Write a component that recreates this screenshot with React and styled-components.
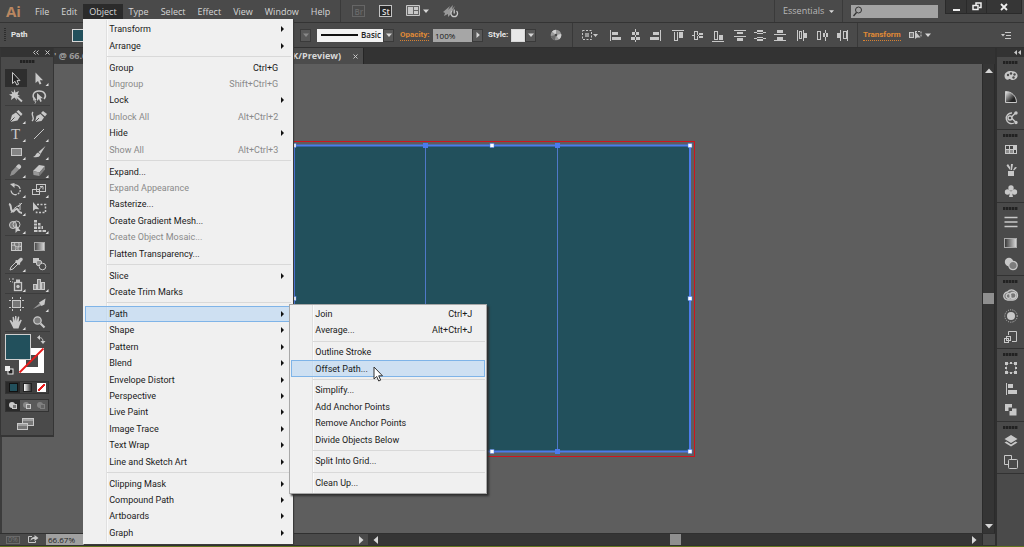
import styled, { createGlobalStyle, css } from 'styled-components';

const GlobalStyle = createGlobalStyle`
  * {
    box-sizing: border-box;
  }

  body {
    margin: 0;
    background: #5e5e5e;
    font-family: 'Open Sans', 'Noto Sans', sans-serif;
    font-size: 9px;
    line-height: 12px;
    color: #d6d6d6;
    overflow: hidden;
  }

  button, input, select {
    margin: 0;
    padding: 0;
    border: 0;
    border-radius: 0;
    outline: 0;
    background: none;
    color: inherit;
    font: inherit;
  }
`;

const Page = styled.div`
  height: 100vh;
  display: flex;
  flex-direction: column;
  border-bottom: 1px solid #64761f;
`;

/* top bar */

const MenuBar = styled.header`
  flex: none;
  height: 22px;
  display: flex;
  align-items: center;
  background: #4a4a4a;
`;

const Logo = styled.span`
  width: 29px;
  padding-left: 6px;
  color: #b98761;
  font-size: 15px;
  font-weight: 700;
`;

const MenuNav = styled.nav`
  display: flex;
  padding-top: 1px;
`;

const MenuEntry = styled.div`
  position: relative;
`;

const MenuButton = styled.button`
  display: block;
  height: 15px;
  padding: 0 6px;
  background: ${props => props.$open ? '#2b2b2b' : 'transparent'};
  font-size: 9px;
`;

const BarIcons = styled.div`
  display: flex;
  align-items: center;
  gap: 14px;
  height: 22px;
  margin-left: 4px;
  padding-left: 11px;
  border-left: 1px solid #3a3a3a;
`;

const AppTile = styled.button`
  width: 13px;
  height: 12px;
  border: 1px solid ${props => props.$dim ? '#666' : '#c4c4c4'};
  background: ${props => props.$dim ? 'transparent' : '#2a2a2a'};
  color: ${props => props.$dim ? '#686868' : '#e2e2e2'};
  font-size: 8px;
  font-weight: 600;
  line-height: 9px;
`;

const IconButton = styled.button`
  display: flex;
  align-items: center;
  justify-content: center;
  gap: 3px;
`;

const Workspace = styled.label`
  display: flex;
  align-items: center;
  height: 22px;
  margin-left: auto;
  padding: 0 8px;
  border: solid #3a3a3a;
  border-width: 0 1px;
`;

const WorkspaceSelect = styled.select`
  appearance: none;
  width: 46px;
  color: #b8b8b8;
`;

const Search = styled.label`
  display: flex;
  align-items: center;
  width: 87px;
  height: 13px;
  margin: 0 7px 0 8px;
  padding-left: 1px;
  background: #a3a3a3;
`;

const SearchInput = styled.input`
  flex: 1;
  min-width: 0;
  color: #222;
`;

const WindowButtons = styled.div`
  align-self: flex-start;
  display: flex;
  margin-right: 2px;
  border: 1px solid #2a2a2a;
  border-top: 0;
  background: #363636;
`;

const WindowButton = styled.button`
  display: flex;
  align-items: center;
  justify-content: center;
  width: ${props => props.$wide ? 35 : 20}px;
  height: 13px;

  & + & {
    border-left: 1px solid #2a2a2a;
  }
`;

/* control bar */

const ControlBar = styled.div`
  flex: none;
  height: 26px;
  display: flex;
  align-items: center;
  border-top: 1px solid #343434;
  border-bottom: 1px solid #303030;
  background: #4a4a4a;
  white-space: nowrap;
`;

const SideGrip = styled.span`
  width: 2px;
  height: 14px;
  margin: 0 5px 0 4px;
  background: repeating-linear-gradient(#2d2d2d 0 1px, #4a4a4a 1px 2px);
`;

const Strong = styled.span`
  color: #e6e6e6;
  font-family: Roboto, 'Open Sans', sans-serif;
  font-size: 8px;
  font-weight: 700;
`;

const Appearance = styled.div`
  display: flex;
  align-items: center;
  justify-content: space-between;
  width: 300px;
`;

const Swatch = styled.button`
  width: 14px;
  height: 13px;
  border: 1px solid #d8d8d8;
  background: ${props => props.$color};
`;

const FillSwatch = styled(Swatch)`
  margin: 0 auto 0 44px;
`;

const Stepper = styled.button`
  display: flex;
  align-items: center;
  justify-content: center;
  width: 11px;
  height: 13px;
  border: 1px solid #3a3a3a;
  background: #585858;
`;

const Profile = styled.label`
  display: flex;
  align-items: center;
  width: 66px;
  height: 13px;
  margin-left: 6px;
  padding-left: 4px;
  background: #f2f2f2;
`;

const StrokeLine = styled.span`
  width: 37px;
  height: 2px;
  margin-right: 3px;
  background: #111;
`;

const ProfileSelect = styled.select`
  appearance: none;
  width: 22px;
  color: #222;
  font-size: 8px;
  font-weight: 600;
`;

const OrangeLink = styled.a`
  border-bottom: 1px dotted #d98232;
  color: #e08a36;
  font-family: Roboto, 'Open Sans', sans-serif;
  font-size: 8px;
  font-weight: 700;
  line-height: 10px;
  text-decoration: none;
`;

const OpacityLink = styled(OrangeLink)`
  width: 29px;
  margin: 0 4px 0 6px;
`;

const OpacityInput = styled.input`
  width: 39px;
  height: 13px;
  padding-left: 2px;
  background: #a6a6a6;
  color: #161616;
  font-size: 8px;
`;

const StyleLabel = styled(Strong)`
  width: 23px;
  margin-left: 5px;
`;

const Recolor = styled(IconButton)`
  width: 37px;
  height: 24px;
  padding-left: 4px;
  border-right: 1px solid #393939;
`;

const AlignSet = styled.div`
  display: flex;
  align-items: center;
  gap: 6px;
  padding: 0 7px 0 5px;
`;

const AlignTo = styled(IconButton)`
  margin-right: 4px;
`;

const AlignGroup = styled.div`
  display: flex;
  gap: 4px;
`;

const TransformSet = styled.div`
  display: flex;
  align-items: center;
  gap: 8px;
  height: 24px;
  padding-left: 5px;
  border-left: 1px solid #393939;
`;

const PanelMenu = styled(IconButton)`
  margin: 0 12px 0 auto;
`;

/* drop-down menus */

const menuBox = css`
  position: absolute;
  display: flex;
  flex-direction: column;
  margin: 0;
  padding: 1px;
  list-style: none;
  background: linear-gradient(to right, #f0f0f0 22px, #e0e0e0 22px 23px, #fafafa 23px 24px, #f0f0f0 24px);
  border: 1px solid #f0f0f0;
  color: #1a1a1a;
`;

const Menu = styled.ul`
  ${menuBox}
  z-index: 10;
  top: 15px;
  left: 0;
  width: 210px;
  height: 525px;
  border-bottom-width: 2px;
  box-shadow: 1px 1px 1px #3a3a3a;
`;

const SubMenu = styled.ul`
  ${menuBox}
  top: -2px;
  left: calc(100% - 2px);
  width: 198px;
  height: 190px;
  border-color: #a8a8a8;
  box-shadow: 2px 2px 2px #2f2f2f;
`;

const MenuRow = styled.li`
  position: relative;
  flex: 3 1 0;
  min-height: 0;
`;

const MenuItem = styled.button`
  display: flex;
  align-items: center;
  justify-content: space-between;
  width: 100%;
  height: 100%;
  padding: 0 ${props => props.$parent ? 6 : 12}px 0 23px;
  border: 1px solid ${props => props.$active ? '#7fb4e8' : 'transparent'};
  background: ${props => props.$active ? 'rgba(183, 214, 243, 0.6)' : 'transparent'};
  color: ${props => props.disabled ? '#8a8a8a' : '#1a1a1a'};
  font-family: Roboto, 'Open Sans', sans-serif;
  white-space: nowrap;
`;

const Separator = styled.li`
  flex: 1 1 0;
  display: flex;
  align-items: center;
  padding-left: 22px;

  &::before {
    content: '';
    flex: 1;
    height: 1px;
    background: #d9d9d9;
  }
`;

const Cursor = styled.svg`
  position: absolute;
  top: 6px;
  left: 82px;
  pointer-events: none;
`;

/* work area */

const Body = styled.main`
  position: relative;
  flex: 1;
  min-height: 0;
  display: flex;
`;

const DocumentArea = styled.section`
  flex: 1;
  min-width: 0;
  display: flex;
  flex-direction: column;
`;

const Tabs = styled.div`
  flex: none;
  display: flex;
  height: 16px;
  padding-left: 53px;
  background: #333;
`;

const Tab = styled.button`
  display: flex;
  align-items: center;
  justify-content: space-between;
  width: ${props => props.$width}px;
  padding: 0 5px 0 1px;
  border-right: 1px solid #262626;
  background: ${props => props.$active ? '#4c4c4c' : '#3a3a3a'};
  color: ${props => props.$active ? '#d8d8d8' : '#9c9c9c'};
  font-weight: 700;
  text-align: left;
`;

const TabTitle = styled.span`
  flex: 1;
  padding-right: 12px;
  text-align: ${props => props.$end ? 'right' : 'left'};
`;

const CanvasRow = styled.div`
  flex: 1;
  min-height: 0;
  display: flex;
`;

const Canvas = styled.div`
  flex: 1;
  display: flex;
  align-items: center;
  justify-content: center;
  border-left: 2px solid #3c3c3c;
  background: #5e5e5e;
`;

const VerticalScroll = styled.div`
  display: flex;
  flex-direction: column;
  align-items: center;
  justify-content: space-between;
  width: 13px;
  padding: 3px 0;
  border: solid #2b2b2b;
  border-width: 0 1px;
  background: #353535;
`;

const Thumb = styled.span`
  width: 11px;
  height: 11px;
  background: #8f8f8f;
`;

const StatusBar = styled.footer`
  flex: none;
  display: flex;
  height: 13px;
  border-top: 1px solid #303030;
  border-bottom: 1px solid #303030;
  background: #4a4a4a;
`;

const StatusInfo = styled.div`
  display: flex;
  align-items: center;
  width: 368px;
  padding: 0 3px 0 6px;
`;

const GpuBadge = styled.span`
  width: 14px;
  height: 8px;
  margin-right: 7px;
  border: 1px solid #6a6a6a;
  color: #777;
  font-size: 7px;
  line-height: 6px;
  text-align: center;
`;

const ZoomInput = styled.input`
  width: 60px;
  height: 11px;
  margin: 0 auto 0 7px;
  padding-left: 2px;
  background: #a0a0a0;
  color: #222;
  font-size: 8px;
`;

const HorizontalScroll = styled.div`
  flex: 1;
  display: flex;
  align-items: center;
  justify-content: space-between;
  padding: 0 4px;
  background: #353535;
`;

const Corner = styled.span`
  width: 13px;
  border-left: 1px solid #2b2b2b;
`;

/* tools */

const ToolPanel = styled.aside`
  position: absolute;
  top: 0;
  left: 0;
  width: 54px;
  padding-bottom: 3px;
  border: solid #353535;
  border-width: 0 1px 2px;
  background: #4a4a4a;
`;

const PanelHead = styled.div`
  display: flex;
  align-items: center;
  justify-content: flex-end;
  gap: 6px;
  height: 9px;
  padding-right: 3px;
  background: #333;
`;

const Grip = styled.div`
  width: 15px;
  height: 3px;
  margin: 3px auto ${props => props.$gap}px;
  background: repeating-linear-gradient(to right, #222 0 2px, #383838 2px 3px);
`;

const ToolGroup = styled.div`
  display: grid;
  grid-template-columns: 23px 23px;
  margin: 0 3px 1px 4px;
  border-bottom: 1px solid #3c3c3c;
`;

const ToolButton = styled.button`
  display: block;
  width: 22px;
  height: 18px;
  background: ${props => props.$active ? '#2e2e2e' : 'transparent'};
`;

const ColorWell = styled.div`
  margin: 2px 0 2px 4px;
`;

const ModeRow = styled.div`
  display: flex;
  width: 44px;
  margin: 0 0 5px 4px;
  border: 1px solid #333;
  background: ${props => props.$raised ? '#5a5a5a' : '#3f3f3f'};
`;

const ModeButton = styled.button`
  display: flex;
  align-items: center;
  justify-content: center;
  flex: 1;
  height: 11px;
  background: ${props => props.$active ? '#2a2a2a' : 'transparent'};
`;

const ModeColor = styled.span`
  width: 9px;
  height: 9px;
  border: 1px solid ${props => props.$edge};
  background: ${props => props.$paint};
`;

const ScreenMode = styled(IconButton)`
  width: 42px;
  height: 15px;
  margin-left: 4px;
`;

/* right dock */

const Dock = styled.aside`
  width: 29px;
  border-left: 2px solid #2f2f2f;
  background: #4a4a4a;
`;

const DockGroup = styled.div`
  padding: 1px 0;
  border-bottom: 1px solid #323232;
`;

const DockButton = styled(IconButton)`
  width: 27px;
  height: 21px;
`;

const menus = ['File', 'Edit', 'Object', 'Type', 'Select', 'Effect', 'View', 'Window', 'Help'];

const pathMenu = [
  { label: 'Join', keys: 'Ctrl+J' },
  { label: 'Average...', keys: 'Alt+Ctrl+J' },
  null,
  { label: 'Outline Stroke' },
  { label: 'Offset Path...', active: true, cursor: true },
  null,
  { label: 'Simplify...' },
  { label: 'Add Anchor Points' },
  { label: 'Remove Anchor Points' },
  { label: 'Divide Objects Below' },
  null,
  { label: 'Split Into Grid...' },
  null,
  { label: 'Clean Up...' },
];

const objectMenu = [
  { label: 'Transform', parent: true },
  { label: 'Arrange', parent: true },
  null,
  { label: 'Group', keys: 'Ctrl+G' },
  { label: 'Ungroup', keys: 'Shift+Ctrl+G', disabled: true },
  { label: 'Lock', parent: true },
  { label: 'Unlock All', keys: 'Alt+Ctrl+2', disabled: true },
  { label: 'Hide', parent: true },
  { label: 'Show All', keys: 'Alt+Ctrl+3', disabled: true },
  null,
  { label: 'Expand...' },
  { label: 'Expand Appearance', disabled: true },
  { label: 'Rasterize...' },
  { label: 'Create Gradient Mesh...' },
  { label: 'Create Object Mosaic...', disabled: true },
  { label: 'Flatten Transparency...' },
  null,
  { label: 'Slice', parent: true },
  { label: 'Create Trim Marks' },
  null,
  { label: 'Path', parent: true, active: true, items: pathMenu },
  { label: 'Shape', parent: true },
  { label: 'Pattern', parent: true },
  { label: 'Blend', parent: true },
  { label: 'Envelope Distort', parent: true },
  { label: 'Perspective', parent: true },
  { label: 'Live Paint', parent: true },
  { label: 'Image Trace', parent: true },
  { label: 'Text Wrap', parent: true },
  { label: 'Line and Sketch Art', parent: true },
  null,
  { label: 'Clipping Mask', parent: true },
  { label: 'Compound Path', parent: true },
  { label: 'Artboards', parent: true },
  { label: 'Graph', parent: true },
];

const ink = '#c8c8c8';

// every tool is drawn in a 22 x 18 box
const tools = [
  [
    { name: 'Selection', active: true, art: <path d="M7.5 3.5V14.5L10 12.3 11.8 16 13.6 15.2 12 11.6H15z" fill="#222" stroke={ink} /> },
    { name: 'Direct Selection', more: true, art: <path d="M7.5 3.5V14L10 11.9 11.6 15.6 13.4 14.8 11.8 11.2H15z" fill={ink} /> },
    { name: 'Magic Wand', art: <g><path d="M11 9l6 5.500" stroke={ink} strokeWidth="1.8" /><path d="M9.500 2l1 3.500L14 4l-1.500 3.500L15 9l-3.500.5.5 4-2.500-3L6 13l.7-3.700L4 7.500l3.300-.7L6 4l2.700 1.500z" fill={ink} /></g> },
    { name: 'Lasso', art: <g><path d="M8 13c-5-3-3-9 3-9s8 5 5 8" fill="none" stroke={ink} strokeWidth="1.5" /><path d="M9 6v8l2-2 1.300 3 1.500-.7-1.200-3h2.400z" fill={ink} /><path d="M7 11c-2 0-2 3 0 3 1 0 1 1 0 2.500" fill="none" stroke={ink} /></g> },
  ],
  [
    { name: 'Pen', more: true, art: <g><path d="M5 15l2-7 4-2.500 4 4-2.500 4z" fill={ink} /><path d="M11.500 4.500l2-1.500 4 4-1.500 2z" fill={ink} /><path d="M5 15l4.500-4.500" stroke="#4a4a4a" /></g> },
    { name: 'Curvature', art: <g><path d="M7 15l1.500-6 4-2 3.500 3.500-2.500 3.500z" fill={ink} /><path d="M13 6l2-2 4 3-2 2.500z" fill={ink} /><path d="M4 14c4-3-2-6 1-9" fill="none" stroke={ink} strokeWidth="1.300" /><path d="M7 15l4-4" stroke="#4a4a4a" /></g> },
    { name: 'Type', more: true, art: <text x="6" y="14" fontFamily="Liberation Serif, serif" fontSize="15" fill={ink}>T</text> },
    { name: 'Line', more: true, art: <path d="M6 14L16 4" stroke={ink} /> },
    { name: 'Rectangle', more: true, art: <rect x="6.500" y="5.500" width="10" height="7" fill="#858585" stroke={ink} /> },
    { name: 'Paintbrush', more: true, art: <g><path d="M17.500 3l-7 6 2 2z" fill={ink} /><path d="M10 9.500l2.500 2c-1 3-4 3-7.500 2.500 3-1 2.500-3.500 5-4.500z" fill={ink} /></g> },
    { name: 'Pencil', more: true, art: <g><path d="M5 15l1.500-4.500 6.500-7c1.500-1 4 1.500 3 3l-7 7z" fill="#909090" /><path d="M12.500 4c1.500-1.500 4.500 1 3.300 2.700l-1.500 1.500-3.300-2.700z" fill={ink} /></g> },
    { name: 'Eraser', more: true, art: <g><path d="M5 10l6-6 6 1-5.500 6.500z" fill={ink} /><path d="M5 10l6.500 1.500V15L5.500 14z" fill="#999" /><path d="M11.500 11.500L17 5v3.500L11.500 15z" fill="#7c7c7c" /></g> },
  ],
  [
    { name: 'Rotate', more: true, art: <g><path d="M8 4.500c5-2.500 10 4 5.500 8-3 2.500-7 1-7.500-3" fill="none" stroke={ink} strokeWidth="1.300" strokeDasharray="9 1 2 1 2 1" /><path d="M5 3l4.500-1v5z" fill={ink} /></g> },
    { name: 'Scale', more: true, art: <g fill="none" stroke={ink}><rect x="8.500" y="3.500" width="9" height="7" /><rect x="4.500" y="8.500" width="7" height="5" /><path d="M10 9l5-4M12 5.500h3v3" /></g> },
    { name: 'Width', more: true, art: <g fill="none" stroke={ink}><path d="M4 5c3 1 1 5 3 7s3-3 5-2 1 4 5 4" strokeWidth="2" /><path d="M6 14c2-5 6-6 8-8M15 4v7M13 8l4-4" /></g> },
    { name: 'Free Transform', art: <g><path d="M5 3v9l2.300-2 4 .2z" fill={ink} /><path d="M9 5.500h8.500v8H8.500V11" fill="none" stroke={ink} strokeDasharray="2 1.500" strokeWidth="1.500" /></g> },
    { name: 'Shape Builder', more: true, art: <g><circle cx="8" cy="8" r="3.500" fill="#777" stroke={ink} /><circle cx="11.500" cy="7.500" r="3.500" fill="none" stroke={ink} /><path d="M10.500 7v9l2-2 3 0z" fill={ink} /></g> },
    { name: 'Perspective Grid', more: true, art: <g><path d="M6 3h3v9H6zM10 6h2.500v6H10zM13.500 9H15v3h-1.500zM6 13h12v2H6z" fill={ink} /><path d="M6 6h3M6 9h6.500M10 13v2M14 13v2" stroke="#4a4a4a" /></g> },
  ],
  [
    { name: 'Mesh', art: <g stroke={ink} fill="none"><rect x="6.500" y="5.500" width="10" height="8" fill="#777" /><path d="M6.500 9c3-3 4 3 10 0M10 5.500c-2 4 3 4 0 8M13.500 5.500c2 4-2 4 0 8" /></g> },
    { name: 'Gradient', art: <g><defs><linearGradient id="tool-gradient"><stop stopColor="#444" /><stop offset="1" stopColor="#ddd" /></linearGradient></defs><rect x="6.500" y="5.500" width="10" height="8" fill="url(#tool-gradient)" stroke="#a8a8a8" /></g> },
    { name: 'Eyedropper', more: true, art: <g><path d="M5 15l1-3 5-5 2 2-5 5z" fill="none" stroke={ink} /><path d="M10 6l1.500-1 1 .3L15 3c2-1 3.500.7 2.500 2.200L15 8l.2 1.200-1.200 1z" fill={ink} /></g> },
    { name: 'Blend', art: <g stroke={ink}><rect x="5" y="3" width="6" height="5" fill={ink} stroke="none" /><rect x="8.500" y="5.500" width="5" height="5" rx="1.500" fill="#888" /><circle cx="14.500" cy="11.500" r="3.300" fill="#4a4a4a" /></g> },
  ],
  [
    { name: 'Symbol Sprayer', more: true, art: <g><rect x="9.500" y="7.500" width="7" height="8" fill="#555" stroke={ink} strokeWidth="1.300" /><path d="M11 7V4.500h4V7" fill={ink} /><circle cx="13" cy="11.500" r="1.700" fill={ink} /><path d="M4 4h1M7 4h2M5 6.500h1M7 7h1" stroke={ink} /></g> },
    { name: 'Column Graph', more: true, art: <g fill="#8e8e8e" stroke={ink}><rect x="5.500" y="9.500" width="3" height="5" /><rect x="9.500" y="4.500" width="3" height="10" /><rect x="13.500" y="7.500" width="3" height="7" /></g> },
  ],
  [
    { name: 'Artboard', art: <g stroke={ink} fill="none"><rect x="7.500" y="5.500" width="8" height="7" fill="#777" /><path d="M7.500 2v2M15.500 2v2M7.500 14v2M15.500 14v2M4 5.500h2M17 5.500h2M4 12.500h2M17 12.500h2" /></g> },
    { name: 'Slice', more: true, art: <g><path d="M5 14l7-6 2 2z" fill="#999" /><path d="M11 7.500l6.500-4-1 6-3 1.500z" fill={ink} /></g> },
    { name: 'Hand', more: true, art: <path d="M6 10.500l-1.500-3 1.300-.6L8 9.500 7.500 4l1.300-.2L10 8V3h1.400l.3 5 1.300-4.500 1.300.3L13.700 9l2-2.500 1.100.7-2.300 5.300-1 3H8.500z" fill={ink} /> },
    { name: 'Zoom', art: <g><circle cx="9.500" cy="7.500" r="3.700" fill="#7d7d7d" stroke={ink} strokeWidth="1.300" /><path d="M12.500 10.500l4 4" stroke={ink} strokeWidth="2.200" /></g> },
  ],
];

// dock icons use a 16 x 16 box
const dock = [
  [
    { name: 'Color', art: <g><path d="M8 3c5 0 7 3 6.500 5.500S11 12.500 9 12 7 10.500 5.500 11.500 1.500 11 1.500 8 4 3 8 3z" fill={ink} /><g fill="#4a4a4a"><circle cx="5" cy="7" r="1.200" /><circle cx="8" cy="5.500" r="1.200" /><circle cx="11.500" cy="6.500" r="1.200" /><circle cx="10.500" cy="9.500" r="1.200" /></g></g> },
    { name: 'Color Guide', art: <g><defs><linearGradient id="guide" x1="0" y1="0" x2="1" y2="1"><stop stopColor="#eee" /><stop offset=".7" stopColor="#222" /></linearGradient></defs><path d="M2.500 2.500c6 0 11 4.500 11 11h-11z" fill="url(#guide)" stroke={ink} /></g> },
    { name: 'Color Themes', art: <g fill="none" stroke={ink} strokeWidth="1.400"><path d="M11 13A5.300 5.300 0 1 1 9 3" /><circle cx="7" cy="8" r="2" /><path d="M8.500 7l4-4M9 8.500l4 4" /><circle cx="13" cy="3" r="1" fill={ink} /><circle cx="13" cy="12.500" r="1" fill={ink} /></g> },
  ],
  [
    { name: 'Swatches', art: <g><path d="M2 4h12v9H2z" fill={ink} /><path d="M3 5h3v3H3zM7 5h3v3H7zM11 9h2v3h-2z" fill="#444" /><path d="M3 9h3v3H3zM7 9h3v3H7z" fill="#8e8e8e" /></g> },
    { name: 'Brushes', art: <g fill={ink}><path d="M5 9h6v5H5z" /><path d="M7 8L3.500 3.500 5 2l2 3zM7.500 8L8 2h2L9 8zM10 8l2-3 2 .5L11 8.500z" /></g> },
    { name: 'Symbols', art: <g fill={ink}><circle cx="8" cy="5" r="2.700" /><circle cx="4.500" cy="9" r="2.700" /><circle cx="11.500" cy="9" r="2.700" /><path d="M7.300 8h1.400l1.300 6H6z" /></g> },
  ],
  [
    { name: 'Stroke', art: <path d="M1.500 3.500h13M1.500 8h13M1.500 12.500h13" stroke={ink} strokeWidth="1.600" /> },
    { name: 'Gradient', art: <g><defs><linearGradient id="dock-gradient"><stop stopColor="#333" /><stop offset="1" stopColor="#ddd" /></linearGradient></defs><rect x="1.500" y="3.500" width="12" height="9" fill="url(#dock-gradient)" stroke="#aaa" /></g> },
    { name: 'Transparency', art: <g><circle cx="6" cy="6" r="4.200" fill={ink} /><circle cx="10" cy="9.500" r="4.200" fill="#7d7d7d" stroke={ink} strokeWidth="1.200" /></g> },
  ],
  [
    { name: 'Libraries', art: <g fill="none" stroke={ink} strokeWidth="1.300"><path d="M5 13a4 4 0 0 1-.5-8C8 1 14 3.500 14.500 8c.2 3-2 5-4.500 5z" fill="#777" /><circle cx="5.500" cy="9" r="2.300" /><circle cx="10" cy="8.500" r="3" /></g> },
    { name: 'Appearance', art: <g><circle cx="8" cy="8" r="4" fill={ink} /><circle cx="8" cy="8" r="6.200" fill="none" stroke={ink} strokeDasharray="1 1.300" /></g> },
    { name: 'Graphic Styles', art: <g fill="none" stroke={ink}><path d="M5.500 6V2.500h8v10H9" /><rect x="1.500" y="9.500" width="4" height="4" /><rect x="3.500" y="7.500" width="4" height="4" /></g> },
  ],
  [
    { name: 'Transform', art: <g><rect x="3.500" y="3.500" width="9" height="9" fill="none" stroke="#999" strokeDasharray="1 1" /><g fill={ink}><path d="M2 2h3v3H2zM11 2h3v3h-3zM2 11h3v3H2zM11 11h3v3h-3zM7 2h2v2H7zM7 12h2v2H7zM2 7h2v2H2zM12 7h2v2h-2z" /></g></g> },
    { name: 'Align', art: <path d="M3 2h1v12H3zM5 3h5v4H5zM5 9h9v4H5z" fill={ink} /> },
    { name: 'Pathfinder', art: <g><path d="M2 2h7v7H2z" fill={ink} /><path d="M6.500 6.500h7v7h-7z" fill={ink} /><path d="M5.500 5.500H9V9H5.500z" fill="#4a4a4a" /></g> },
  ],
  [
    { name: 'Layers', art: <g fill={ink}><path d="M8 2l6.500 4L8 10 1.500 6z" /><path d="M1.500 9.500l2-1L8 11.500l4.500-3 2 1L8 13.500z" /></g> },
    { name: 'Artboards', art: <g fill="none" stroke={ink}><path d="M5 10.500H1.500v-9h7V5" /><rect x="5.500" y="5.500" width="9" height="9" rx="1" /></g> },
  ],
];

const alignIcons = [
  [
    ['Align left', 'M2 3h1v11H2zM4 5h6v3H4zM4 10h9v3H4z'],
    ['Align centre', 'M7 2h1v13H7zM4 5h7v3H4zM3 10h9v3H3z'],
    ['Align right', 'M12 3h1v11h-1zM5 5h6v3H5zM2 10h9v3H2z'],
  ],
  [
    ['Align top', 'M2 3h12v1H2zM4 5h1v8h2V5h1v9H4zM9 5h4v6H9z'],
    ['Align middle', 'M2 8h2v1H2zM7 8h6v1H7zM4 4h4v9H4zM5 5v7h2V5zM9 6h4v5H9z'],
    ['Align bottom', 'M2 14h12v1H2zM4 4h4v9H4zM5 5v7h2V5zM9 8h4v5H9z'],
  ],
  [
    ['Distribute top', 'M2 3h12v1H2zM5 5h6v2H5zM2 9h12v1H2zM5 11h6v3H5z'],
    ['Distribute middle', 'M2 5h12v1H2zM5 3h6v4H5zM2 11h12v1H2zM5 10h6v4H5z'],
    ['Distribute bottom', 'M2 7h12v1H2zM5 3h6v3H5zM2 13h12v1H2zM5 10h6v3H5z'],
  ],
  [
    ['Distribute left', 'M3 3h1v11H3zM5 4h3v8H5zM6 5v6h1V5zM9 3h1v11H9zM10 6h3v5h-3z'],
    ['Distribute centre', 'M3 4h4v9H3zM4 5v7h2V5zM11 3h1v11h-1zM9 6h5v4H9z'],
    ['Distribute right', 'M6 3h1v11H6zM3 6h3v5H3zM13 3h1v11h-1zM9 4h4v8H9zM10 5v6h2V5z'],
  ],
];

const Arrow = ({ dir, color = '#d6d6d6', size = 8 }) => {
  const turn = { right: 0, down: 90, left: 180, up: 270 }[dir];
  return (
    <svg width={size} height={size} viewBox="0 0 8 8">
      <path d="M2 0L6.500 4 2 8z" fill={color} transform={`rotate(${turn} 4 4)`} />
    </svg>
  );
};

const MenuList = ({ items }) => (
  items.map((item, index) => (
    item === null ? <Separator key={index} /> : (
      <MenuRow key={item.label}>
        <MenuItem $active={item.active} $parent={item.parent} disabled={item.disabled}>
          <span>{item.label}</span>
          {item.keys && <span>{item.keys}</span>}
          {item.parent && (
            <svg width="3" height="6" viewBox="0 0 3 6"><path d="M0 0l3 3-3 3z" fill="#111" /></svg>
          )}
        </MenuItem>
        {item.items && <SubMenu><MenuList items={item.items} /></SubMenu>}
        {item.cursor && (
          <Cursor width="11" height="17" viewBox="0 0 11 17">
            <path d="M1 1v12l2.700-2.500 2 4.500 2-.9-2-4.300H9.500z" fill="#fff" stroke="#333" />
          </Cursor>
        )}
      </MenuRow>
    )
  ))
);

const TopBar = () => (
  <MenuBar>
    <Logo>Ai</Logo>
    <MenuNav>
      {menus.map(name => (
        <MenuEntry key={name}>
          <MenuButton $open={name === 'Object'}>{name}</MenuButton>
          {name === 'Object' && <Menu><MenuList items={objectMenu} /></Menu>}
        </MenuEntry>
      ))}
    </MenuNav>
    <BarIcons>
      <AppTile $dim>Br</AppTile>
      <AppTile>St</AppTile>
      <IconButton aria-label="Arrange Documents">
        <svg width="14" height="12" viewBox="0 0 14 12">
          <path d="M.5.5h13v10H.5z" fill="#666" stroke={ink} />
          <path d="M2 2h5v7H2zM8 2h4v3H8zM8 6h4v3H8z" fill={ink} />
        </svg>
        <Arrow dir="down" size={6} />
      </IconButton>
      <IconButton aria-label="GPU Performance">
        <svg width="16" height="14" viewBox="0 0 16 14">
          <path d="M0 8l7-6-2 4 5-5-1 4 3-3-4 8-3 3 0-3-4 2 1-3z" fill="#999" />
          <path d="M9 7a3.300 3.300 0 1 0 4.500 0" fill="#4a4a4a" stroke={ink} strokeWidth="1.300" />
          <path d="M11.200 5.500v4" stroke={ink} strokeWidth="1.300" />
        </svg>
      </IconButton>
    </BarIcons>
    <Workspace>
      <WorkspaceSelect aria-label="Workspace"><option>Essentials</option></WorkspaceSelect>
      <Arrow dir="down" size={5} />
    </Workspace>
    <Search>
      <svg width="11" height="11" viewBox="0 0 11 11" fill="none" stroke="#333">
        <circle cx="6.500" cy="4" r="3" />
        <path d="M4.500 6.500L1.500 10" strokeWidth="1.300" />
      </svg>
      <SearchInput aria-label="Search" />
    </Search>
    <WindowButtons>
      <WindowButton aria-label="Minimize">
        <svg width="9" height="11" viewBox="0 0 9 11"><path d="M1 8h7v2H1z" fill="#eee" /></svg>
      </WindowButton>
      <WindowButton aria-label="Restore">
        <svg width="10" height="9" viewBox="0 0 10 9" fill="none" stroke="#eee" strokeWidth="1.500">
          <path d="M4 3V1h5v4.500H7" />
          <rect x="1" y="3.500" width="5" height="4" />
        </svg>
      </WindowButton>
      <WindowButton $wide aria-label="Close">
        <svg width="8" height="8" viewBox="0 0 8 8"><path d="M1 1l6 6M7 1L1 7" stroke="#eee" strokeWidth="1.800" /></svg>
      </WindowButton>
    </WindowButtons>
  </MenuBar>
);

const Controls = () => (
  <ControlBar>
    <SideGrip />
    <Appearance>
      <Strong>Path</Strong>
      <FillSwatch $color="#22505c" aria-label="Fill" />
      <Stepper aria-label="Brush"><Arrow dir="down" color="#888" size={6} /></Stepper>
    </Appearance>
    <Profile>
      <StrokeLine />
      <ProfileSelect aria-label="Stroke profile"><option>Basic</option></ProfileSelect>
    </Profile>
    <Stepper aria-label="Stroke profiles"><Arrow dir="down" size={6} /></Stepper>
    <OpacityLink href="#opacity">Opacity:</OpacityLink>
    <OpacityInput aria-label="Opacity" defaultValue="100%" />
    <Stepper aria-label="Opacity values"><Arrow dir="right" size={6} /></Stepper>
    <StyleLabel>Style:</StyleLabel>
    <Swatch $color="#e8e8e8" aria-label="Graphic style" />
    <Stepper aria-label="Graphic styles"><Arrow dir="down" size={6} /></Stepper>
    <Recolor aria-label="Recolor Artwork">
      <svg width="12" height="12" viewBox="0 0 12 12">
        <circle cx="6" cy="6" r="5.300" fill="#999" />
        <path d="M6 6L2 2.500A5.300 5.300 0 0 1 6 .7zM6 6l5.200-1A5.300 5.300 0 0 1 9 10.400z" fill="#d0d0d0" />
        <path d="M6 6L.8 7a5.300 5.300 0 0 0 4 4.200z" fill="#6a6a6a" />
        <circle cx="6" cy="6" r="1.300" fill="#4a4a4a" />
      </svg>
    </Recolor>
    <AlignSet>
      <AlignTo aria-label="Align To">
        <svg width="20" height="14" viewBox="0 0 20 14">
          <rect x="4.500" y="2.500" width="9" height="9" fill="none" stroke={ink} strokeDasharray="2 1.500" />
          <path d="M7 5h4v4H7z" fill="#999" />
          <path d="M15 6h5l-2.500 3z" fill={ink} />
        </svg>
      </AlignTo>
      {alignIcons.map(group => (
        <AlignGroup key={group[0][0]}>
          {group.map(([name, d]) => (
            <IconButton key={name} aria-label={name}>
              <svg width="16" height="16" viewBox="0 0 16 16"><path d={d} fill={ink} fillRule="evenodd" /></svg>
            </IconButton>
          ))}
        </AlignGroup>
      ))}
    </AlignSet>
    <TransformSet>
      <OrangeLink href="#transform">Transform</OrangeLink>
      <IconButton aria-label="Isolate">
        <svg width="13" height="10" viewBox="0 0 13 10">
          <rect x=".5" y="2.500" width="4" height="5" fill="#777" stroke={ink} />
          <path d="M6 1.500h6v5" fill="none" stroke={ink} strokeDasharray="2 1" />
          <path d="M6 1v8l2-1.500 3.500 0z" fill={ink} />
        </svg>
        <Arrow dir="down" size={6} />
      </IconButton>
    </TransformSet>
    <PanelMenu aria-label="Panel menu">
      <svg width="11" height="9" viewBox="0 0 11 9">
        <path d="M0 3h4L2 5.500zM4 1h6v1H4zM5 4h5v1H5zM4 7h6v1H4z" fill={ink} />
      </svg>
    </PanelMenu>
  </ControlBar>
);

const Artwork = () => (
  <svg width="406" height="317" viewBox="0 0 406 317">
    <rect x=".5" y="1.500" width="405" height="315" fill="none" stroke="#d0141e" />
    <rect x="5" y="5.500" width="396" height="306" fill="#22505c" stroke="#4b7bec" strokeWidth="2" />
    <path d="M136.500 6v305M268.500 6v305" stroke="#4f78c8" />
    <g fill="#4b7bec">
      <path d="M134 3h5v5h-5zM266 3h5v5h-5zM134 309h5v5h-5zM266 309h5v5h-5z" />
    </g>
    <g fill="#fff" stroke="#4b7bec" strokeWidth=".5">
      {[[5, 5.5], [203, 5.5], [401, 5.5], [5, 158.5], [401, 158.5], [5, 311.5], [203, 311.5], [401, 311.5]].map(([x, y]) => (
        <rect key={`${x}-${y}`} x={x - 2} y={y - 2} width="4" height="4" />
      ))}
    </g>
  </svg>
);

const Tools = () => (
  <ToolPanel>
    <PanelHead>
      <svg width="6" height="5" viewBox="0 0 6 5" fill="none" stroke={ink}><path d="M2.500.5l-2 2 2 2M5.500.5l-2 2 2 2" /></svg>
      <svg width="5" height="5" viewBox="0 0 5 5"><path d="M.5.5l4 4M4.500.5l-4 4" stroke={ink} /></svg>
    </PanelHead>
    <Grip $gap={6} />
    {tools.map(group => (
      <ToolGroup key={group[0].name}>
        {group.map(tool => (
          <ToolButton key={tool.name} $active={tool.active} aria-label={tool.name}>
            <svg width="22" height="18" viewBox="0 0 22 18">
              {tool.art}
              {tool.more && <path d="M20.500 14v3h-3z" fill="#ddd" />}
            </svg>
          </ToolButton>
        ))}
      </ToolGroup>
    ))}
    <ColorWell>
      <svg width="44" height="42" viewBox="0 0 44 42">
        <path d="M14 14h25v25H14zM21 21v12h12V21z" fill="#fff" fillRule="evenodd" />
        <path d="M14.500 38.500l24-24" stroke="#e81c1c" strokeWidth="1.800" />
        <rect x=".5" y=".5" width="25" height="25" fill="#22505c" stroke="#d0d0d0" />
        <path d="M33 3.500c4 0 5 1 5 5" fill="none" stroke={ink} />
        <path d="M32 3.500l3-2.500v5zM38 10l-2.500-3h5z" fill={ink} />
        <rect x="3" y="35" width="5" height="5" fill="#222" stroke="#eee" />
        <path d="M0 32h5v5H0z" fill="#eee" />
      </svg>
    </ColorWell>
    <ModeRow>
      <ModeButton $active aria-label="Color"><ModeColor $edge="#111" $paint="#22505c" /></ModeButton>
      <ModeButton aria-label="Gradient"><ModeColor $edge="#222" $paint="linear-gradient(to right, #fff, #333)" /></ModeButton>
      <ModeButton aria-label="None"><ModeColor $edge="#fff" $paint="linear-gradient(135deg, #fff 36%, #e81c1c 36% 64%, #fff 64%)" /></ModeButton>
    </ModeRow>
    <ModeRow $raised>
      {['Draw Normal', 'Draw Behind', 'Draw Inside'].map((name, index) => (
        <ModeButton key={name} $active={index === 0} aria-label={name}>
          <svg width="10" height="9" viewBox="0 0 10 9" opacity={index === 2 ? 0.35 : 1}>
            <circle cx="4" cy="4" r="3" fill={index === 1 ? '#888' : ink} />
            <rect x="4.500" y="3.500" width="4" height="4" fill="#777" stroke={ink} />
          </svg>
        </ModeButton>
      ))}
    </ModeRow>
    <ScreenMode aria-label="Screen mode">
      <svg width="18" height="13" viewBox="0 0 18 13" fill="#777" stroke={ink}>
        <rect x="5.500" y=".5" width="11" height="7" />
        <rect x=".5" y="5.500" width="10" height="6" />
        <path d="M6 2h10M1 7h9" />
      </svg>
    </ScreenMode>
  </ToolPanel>
);

const App = () => (
  <Page>
    <GlobalStyle />
    <TopBar />
    <Controls />
    <Body>
      <DocumentArea>
        <Tabs>
          <Tab $width={120}><TabTitle>' @ 66.67%</TabTitle></Tab>
          <Tab $active $width={191}>
            <TabTitle $end>(CMYK/Preview)</TabTitle>
            <svg width="5" height="5" viewBox="0 0 5 5"><path d="M.5.5l4 4M4.500.5l-4 4" stroke={ink} /></svg>
          </Tab>
        </Tabs>
        <CanvasRow>
          <Canvas>
            <Artwork />
          </Canvas>
          <VerticalScroll>
            <Arrow dir="up" />
            <Thumb />
            <Arrow dir="down" />
          </VerticalScroll>
        </CanvasRow>
        <StatusBar>
          <StatusInfo>
            <GpuBadge>0%</GpuBadge>
            <svg width="12" height="9" viewBox="0 0 12 9">
              <path d="M5 1.500H1.500v6h7V6" fill="none" stroke={ink} />
              <path d="M3.500 6c0-3 2-4 4-4V0L11.500 3 7.500 6V4c-2 0-3 .5-4 2z" fill={ink} />
            </svg>
            <ZoomInput aria-label="Zoom" defaultValue="66.67%" />
            <Arrow dir="right" />
          </StatusInfo>
          <HorizontalScroll>
            <Arrow dir="left" />
            <Thumb />
            <Arrow dir="right" />
          </HorizontalScroll>
          <Corner />
        </StatusBar>
      </DocumentArea>
      <Dock>
        <PanelHead>
          <svg width="7" height="5" viewBox="0 0 7 5"><path d="M3 0v5L0 2.500zM7 0v5L4 2.500z" fill={ink} /></svg>
        </PanelHead>
        {dock.map(group => (
          <DockGroup key={group[0].name}>
            <Grip $gap={1} />
            {group.map(panel => (
              <DockButton key={panel.name} aria-label={panel.name}>
                <svg width="16" height="16" viewBox="0 0 16 16">{panel.art}</svg>
              </DockButton>
            ))}
          </DockGroup>
        ))}
      </Dock>
      <Tools />
    </Body>
  </Page>
);

export default App;
